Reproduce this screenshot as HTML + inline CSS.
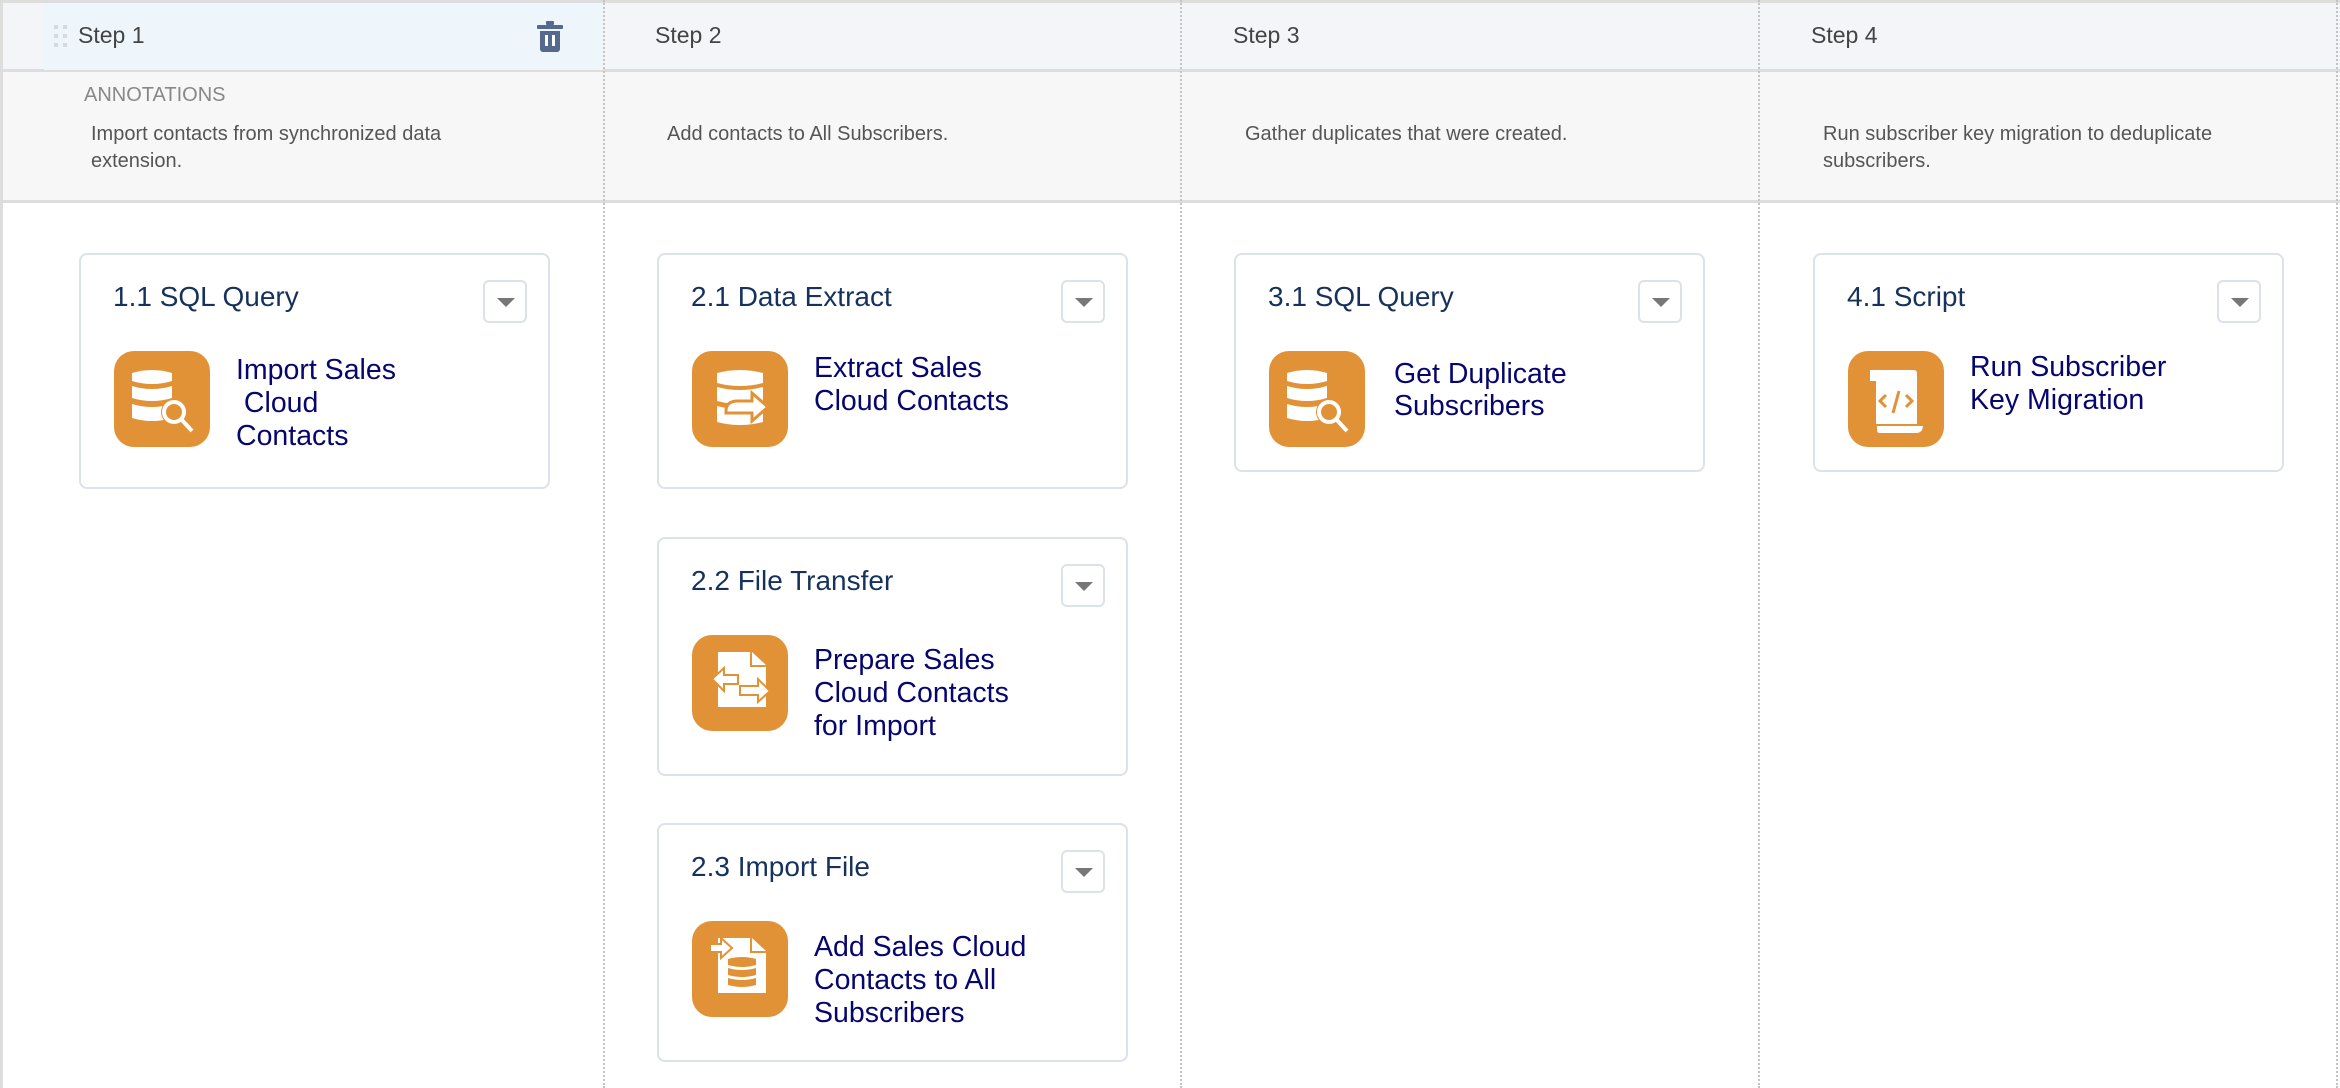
<!DOCTYPE html>
<html><head><meta charset="utf-8"><style>
*{margin:0;padding:0;box-sizing:border-box}
body{width:2340px;height:1088px;background:#fff;position:relative;overflow:hidden;font-family:"Liberation Sans",sans-serif}
.abs{position:absolute}
.hdr{position:absolute;top:0;height:72px;background:#f3f5f9;border-top:3px solid #dddddd;border-bottom:3px solid #dddddd}
.ann{position:absolute;top:72px;height:131px;background:#f7f7f7;border-bottom:3px solid #dddddd}
.vline{position:absolute;top:0;width:0;height:1088px;border-left:2px dotted #c4c4c4}
.step{position:absolute;top:22px;font-size:23px;color:#444}
.atext{position:absolute;font-size:20px;color:#555;line-height:27px}
.card{position:absolute;width:471px;border:2px solid #dde1ea;border-radius:8px;background:#fff}
.title{position:absolute;left:32px;top:26px;font-size:28px;color:#16325c;white-space:nowrap}
.dd{position:absolute;left:402px;top:25px;width:44px;height:43px;border:2px solid #dde1ea;border-radius:6px;background:#fff}
.dd:after{content:"";position:absolute;left:12px;top:16px;border-left:9px solid transparent;border-right:9px solid transparent;border-top:9px solid #777}
.ic{position:absolute;left:33px;top:96px;width:96px;height:96px;border-radius:20px;background:#e29236}
.ic svg{position:absolute;left:0;top:0}
.txt{position:absolute;left:155px;font-size:28.5px;line-height:33px;color:#06066e;white-space:pre}
</style></head><body>
<div class="hdr" style="left:0;width:2340px"></div>
<div class="abs" style="left:44px;top:3px;width:559px;height:67px;background:#eef6fc"></div>
<div class="ann" style="left:0;width:2340px"></div>
<div class="abs" style="left:0;top:0;width:3px;height:1088px;background:#dddddd"></div>
<div class="vline" style="left:603px"></div>
<div class="vline" style="left:1180px"></div>
<div class="vline" style="left:1758px"></div>
<div class="vline" style="left:2336px"></div>

<svg class="abs" style="left:54px;top:25px" width="14" height="22"><g fill="#d6d9dd"><rect x="0" y="0" width="4" height="4"/><rect x="9" y="0" width="4" height="4"/><rect x="0" y="9" width="4" height="4"/><rect x="9" y="9" width="4" height="4"/><rect x="0" y="18" width="4" height="4"/><rect x="9" y="18" width="4" height="4"/></g></svg>
<div class="step" style="left:78px">Step 1</div>
<svg class="abs" style="left:537px;top:21px" width="26" height="31" viewBox="0 0 26 31"><g fill="#54698d"><rect x="9" y="0" width="8" height="4" rx="1"/><rect x="0" y="4" width="26" height="4" rx="1"/><path d="M3 10h20v18a3 3 0 0 1-3 3H6a3 3 0 0 1-3-3z"/></g><rect x="8" y="14" width="3" height="11" fill="#fff"/><rect x="15" y="14" width="3" height="11" fill="#fff"/></svg>
<div class="step" style="left:655px">Step 2</div>
<div class="step" style="left:1233px">Step 3</div>
<div class="step" style="left:1811px">Step 4</div>

<div class="abs" style="left:84px;top:84px;font-size:20px;color:#888">ANNOTATIONS</div>
<div class="atext" style="left:91px;top:121px">Import contacts from synchronized data<br>extension.</div>
<div class="atext" style="left:667px;top:121px">Add contacts to All Subscribers.</div>
<div class="atext" style="left:1245px;top:121px">Gather duplicates that were created.</div>
<div class="atext" style="left:1823px;top:121px">Run subscriber key migration to deduplicate<br>subscribers.</div>

<!-- 1.1 -->
<div class="card" style="left:79px;top:253px;height:236px">
<div class="title">1.1 SQL Query</div><div class="dd"></div>
<div class="ic"><svg width="96" height="96" viewBox="0 0 96 96"><g fill="#fff"><path d="M18 22q20-6 40 0v8q-20 6-40 0z"/><path d="M18 35q20 6 40 0v12q-20 6-40 0z"/><path d="M18 53q20 6 40 0v14q-20 6-40 0z"/></g><circle cx="60" cy="61" r="13" fill="#e29236"/><circle cx="60" cy="61" r="10" fill="none" stroke="#fff" stroke-width="4"/><path d="M67 68l11 12" stroke="#fff" stroke-width="4"/></svg></div>
<div class="txt" style="top:99px">Import Sales
 Cloud
Contacts</div>
</div>

<!-- 2.1 -->
<div class="card" style="left:657px;top:253px;height:236px">
<div class="title">2.1 Data Extract</div><div class="dd"></div>
<div class="ic"><svg width="96" height="96" viewBox="0 0 96 96"><g fill="#fff"><path d="M25 22q23-6 46 0v10q-23 6-46 0z"/><path d="M25 36q23 6 46 0v14q-23 6-46 0z"/><path d="M25 55q23 6 46 0v16q-23 6-46 0z"/></g><path d="M34 60q0-10 12-10h14v-8l16 14-16 14v-8H34z" fill="#fff" stroke="#e29236" stroke-width="3"/></svg></div>
<div class="txt" style="top:97px">Extract Sales
Cloud Contacts</div>
</div>

<!-- 2.2 -->
<div class="card" style="left:657px;top:537px;height:239px">
<div class="title">2.2 File Transfer</div><div class="dd"></div>
<div class="ic"><svg width="96" height="96" viewBox="0 0 96 96"><path d="M26 17h32l16 15v40H26z" fill="#fff"/><path d="M58 17v15h16" fill="#e29236"/><path d="M60 17l14 13H60z" fill="#fff"/><path d="M20 44l12-11v7h14v9H32v7z" fill="#fff" stroke="#e29236" stroke-width="2"/><path d="M78 56l-12 11v-7H48v-9h18v-7z" fill="#fff" stroke="#e29236" stroke-width="2"/></svg></div>
<div class="txt" style="top:105px">Prepare Sales
Cloud Contacts
for Import</div>
</div>

<!-- 2.3 -->
<div class="card" style="left:657px;top:823px;height:239px">
<div class="title">2.3 Import File</div><div class="dd"></div>
<div class="ic"><svg width="96" height="96" viewBox="0 0 96 96"><path d="M26 17h32l16 15v40H26z" fill="#fff"/><path d="M58 17v15h16" fill="#e29236"/><path d="M60 17l14 13H60z" fill="#fff"/><path d="M18 23h11v-6l11 10-11 10v-6H18z" fill="#fff" stroke="#e29236" stroke-width="2"/><g fill="#e29236"><path d="M36 38q14-4 28 0v6q-14 4-28 0z"/><path d="M36 47q14 4 28 0v7q-14 4-28 0z"/><path d="M36 57q14 4 28 0v7q-14 4-28 0z"/></g></svg></div>
<div class="txt" style="top:106px">Add Sales Cloud
Contacts to All
Subscribers</div>
</div>

<!-- 3.1 -->
<div class="card" style="left:1234px;top:253px;height:219px">
<div class="title">3.1 SQL Query</div><div class="dd"></div>
<div class="ic"><svg width="96" height="96" viewBox="0 0 96 96"><g fill="#fff"><path d="M18 22q20-6 40 0v8q-20 6-40 0z"/><path d="M18 35q20 6 40 0v12q-20 6-40 0z"/><path d="M18 53q20 6 40 0v14q-20 6-40 0z"/></g><circle cx="60" cy="61" r="13" fill="#e29236"/><circle cx="60" cy="61" r="10" fill="none" stroke="#fff" stroke-width="4"/><path d="M67 68l11 12" stroke="#fff" stroke-width="4"/></svg></div>
<div class="txt" style="top:103px;left:158px;line-height:32px">Get Duplicate
Subscribers</div>
</div>

<!-- 4.1 -->
<div class="card" style="left:1813px;top:253px;height:219px">
<div class="title">4.1 Script</div><div class="dd"></div>
<div class="ic"><svg width="96" height="96" viewBox="0 0 96 96"><path d="M22 19h44a3 3 0 0 1 3 3v55H28V30h-6q0-11 0-11z" fill="#fff"/><path d="M22 19q6 0 6 6v5h-6z" fill="#fff"/><path d="M28 74h48q0 9-8 9H32q-4 0-4-4z" fill="#fff" stroke="#e29236" stroke-width="2"/><path d="M38 44l-6 6 6 6M58 44l6 6-6 6M51 40l-6 22" fill="none" stroke="#e29236" stroke-width="3"/></svg></div>
<div class="txt" style="top:96px">Run Subscriber
Key Migration</div>
</div>
</body></html>
